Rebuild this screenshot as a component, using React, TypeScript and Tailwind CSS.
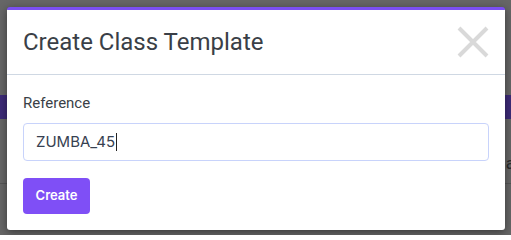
export default function App() {
  return (
    <div className="relative h-[235px] w-[511px] overflow-hidden bg-[#666666] font-['Roboto',sans-serif]">
      {/* dimmed page behind the dialog */}
      <div className="flex flex-col pt-[95px]">
        <div className="h-[24px] bg-[#3d2b78]" />
        <div className="flex h-[65px] items-center justify-end border-b border-[#555] pt-[24px]">
          <span className="mr-[-4px] text-[17px] leading-none text-[#2b2b2b]">a</span>
        </div>
      </div>

      <div className="absolute left-[7px] top-[7px] flex h-[223px] w-[498px] flex-col rounded-[3px] border-t-[3px] border-[#7b4ff2] bg-white shadow-[0_2px_8px_rgba(0,0,0,0.45)]">
        <div className="flex h-[65px] shrink-0 items-center justify-between border-b border-[#cfd8e3] pl-4 pr-4">
          <h2 className="text-[24px] leading-none text-[#3a3f47]">Create Class Template</h2>
          <svg width="32" height="32" viewBox="0 0 32 32" className="mt-[-1px]">
            <path d="M2 2 L30 30 M30 2 L2 30" stroke="#d9d9d9" strokeWidth="4" />
          </svg>
        </div>
        <div className="flex flex-col px-4 pt-[17px]">
          <label className="text-[15px] leading-[22px] text-[#3a3f47]">Reference</label>
          <div className="mt-[9px] flex h-[38px] items-center rounded-[4px] border border-[#c8d3fb] px-3 font-['Inter',sans-serif] text-[15px] text-[#374151]">
            ZUMBA_45
            <span className="ml-[1px] h-[18px] w-px bg-[#222]" />
          </div>
          <button className="mt-[17px] flex h-[36px] w-[67px] items-center justify-center rounded-[4px] bg-[#7f4ff6] font-['Inter',sans-serif] text-[13px] font-semibold text-white">
            Create
          </button>
        </div>
      </div>
    </div>
  );
}
